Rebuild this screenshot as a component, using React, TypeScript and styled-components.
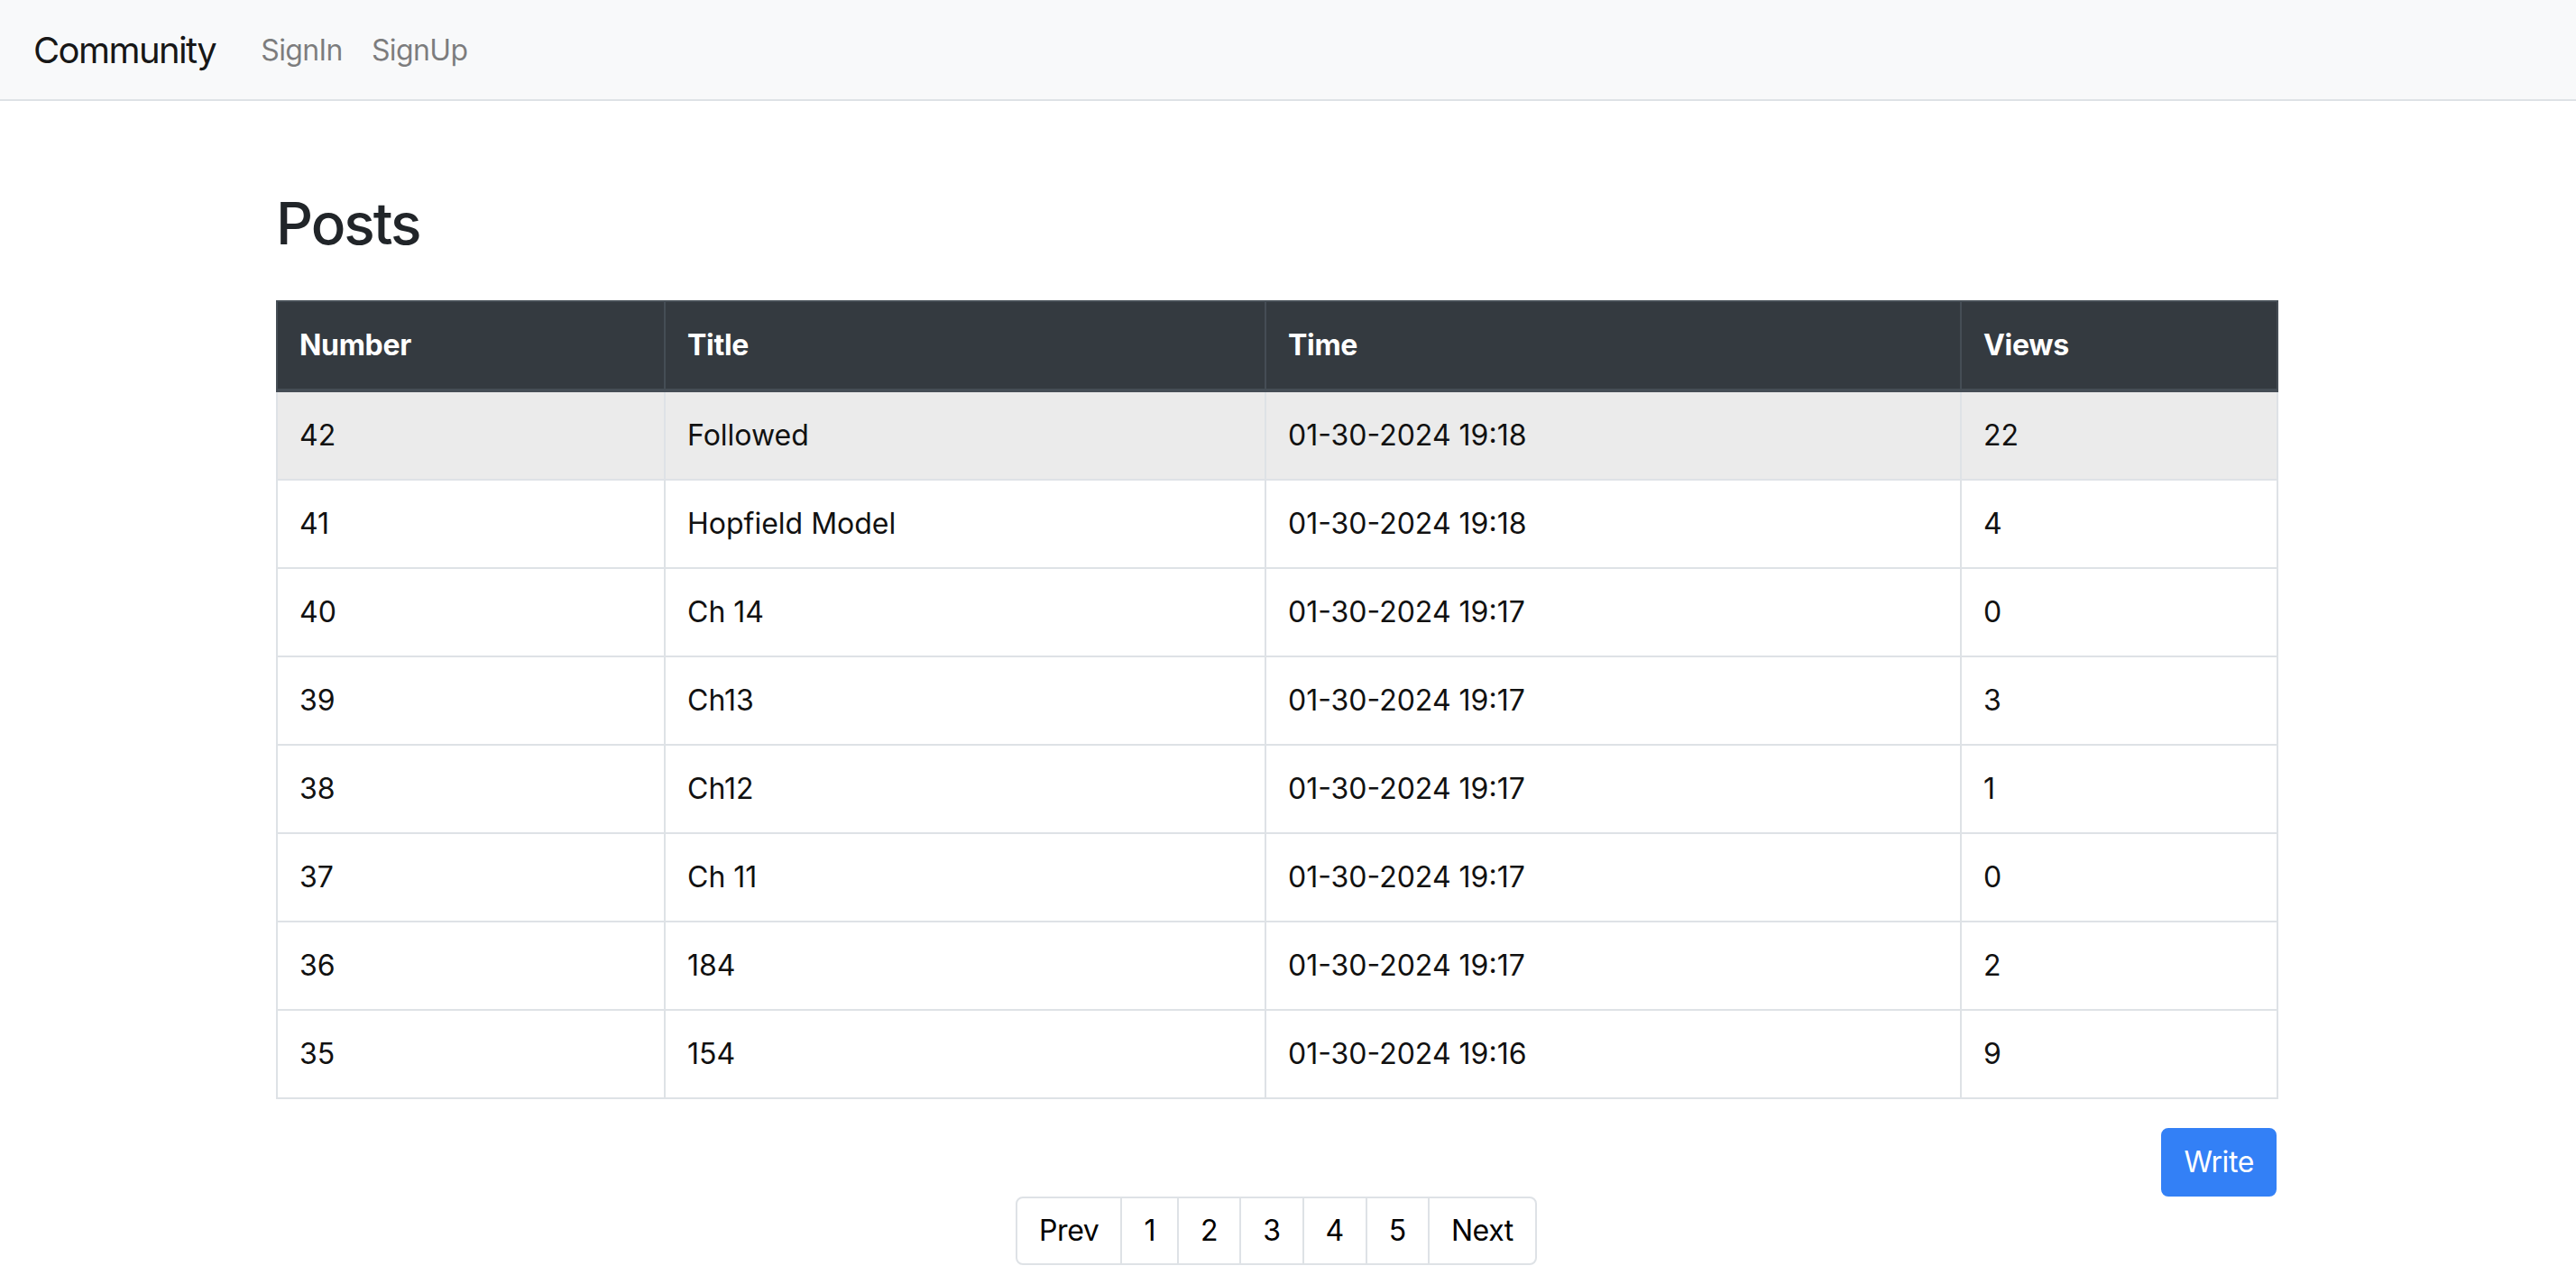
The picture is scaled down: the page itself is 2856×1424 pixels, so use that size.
import React from "react"
import styled, { createGlobalStyle } from "styled-components"

const GlobalStyle = createGlobalStyle`
  * {
    box-sizing: border-box;
  }
  body {
    margin: 0;
    background: #fff;
    color: #212529;
    font-family: Inter, "Liberation Sans", Arial, sans-serif;
  }
`

type Post = {
  id: number
  title: string
  time: string
  views: number
}

const posts: Post[] = [
  { id: 42, title: "Followed", time: "01-30-2024 19:18", views: 22 },
  { id: 41, title: "Hopfield Model", time: "01-30-2024 19:18", views: 4 },
  { id: 40, title: "Ch 14", time: "01-30-2024 19:17", views: 0 },
  { id: 39, title: "Ch13", time: "01-30-2024 19:17", views: 3 },
  { id: 38, title: "Ch12", time: "01-30-2024 19:17", views: 1 },
  { id: 37, title: "Ch 11", time: "01-30-2024 19:17", views: 0 },
  { id: 36, title: "184", time: "01-30-2024 19:17", views: 2 },
  { id: 35, title: "154", time: "01-30-2024 19:16", views: 9 },
]

const columns = [
  { label: "Number", width: 430 },
  { label: "Title", width: 666 },
  { label: "Time", width: 771 },
  { label: "Views", width: 351 },
]

const pages = ["Prev", "1", "2", "3", "4", "5", "Next"]

const Navbar = styled.nav`
  display: flex;
  align-items: center;
  height: 112px;
  padding: 2px 32px 0 37px;
  background: #f8f9fa;
  border-bottom: 2px solid #dee2e6;
`

const Brand = styled.a`
  margin-right: 34px;
  font-size: 40px;
  line-height: 60px;
  letter-spacing: -1.6px;
  color: rgba(0, 0, 0, 0.92);
  text-decoration: none;
`

const NavLinks = styled.div`
  display: flex;
`

const NavLink = styled.a`
  padding: 0 16px;
  font-size: 32px;
  line-height: 48px;
  letter-spacing: -0.6px;
  color: rgba(0, 0, 0, 0.5);
  text-decoration: none;
`

const Page = styled.main`
  padding-right: 26px;
`

const Container = styled.div`
  max-width: 2218px;
  margin: 0 auto;
`

const Heading = styled.h2`
  margin: 98px 0 46px;
  font-size: 64px;
  font-weight: 500;
  line-height: 1.2;
  letter-spacing: -2px;
  color: #212529;
`

const Table = styled.table`
  width: 100%;
  table-layout: fixed;
  border-collapse: collapse;
  margin-bottom: 32px;
  font-size: 32px;
  line-height: 48px;
`

const HeadCell = styled.th`
  padding: 24px;
  text-align: left;
  font-weight: 700;
  letter-spacing: -0.3px;
  color: #fff;
  background: #343a40;
  border: 2px solid #454d55;
  border-bottom-width: 4px;
`

const Row = styled.tr<{ $hover?: boolean }>`
  background: ${p => (p.$hover ? "#ebebeb" : "#fff")};
`

const Cell = styled.td`
  padding: 24px;
  color: #111;
  border: 2px solid #dee2e6;
`

const Actions = styled.div`
  display: flex;
  justify-content: flex-end;
`

const WriteButton = styled.button`
  padding: 12px 23px;
  font-family: inherit;
  font-size: 32px;
  line-height: 48px;
  letter-spacing: -0.4px;
  color: #fff;
  background: #3380f6;
  border: 2px solid #3380f6;
  border-radius: 8px;
`

const Pagination = styled.ul`
  display: flex;
  justify-content: center;
  margin: 0;
  padding: 0;
  list-style: none;
`

const PageItem = styled.li`
  margin-left: -2px;
  padding: 16px 24px;
  font-size: 32px;
  line-height: 40px;
  letter-spacing: -0.4px;
  color: #000;
  background: #fff;
  border: 2px solid #dee2e6;

  &:first-child {
    margin-left: 0;
    border-radius: 8px 0 0 8px;
  }
  &:last-child {
    border-radius: 0 8px 8px 0;
  }
`

const App: React.FC = () => {
  return (
    <>
      <GlobalStyle />
      <Navbar>
        <Brand href="#">Community</Brand>
        <NavLinks>
          <NavLink href="#">SignIn</NavLink>
          <NavLink href="#">SignUp</NavLink>
        </NavLinks>
      </Navbar>
      <Page>
        <Container>
          <Heading>Posts</Heading>
          <Table>
            <colgroup>
              {columns.map(col => (
                <col key={col.label} style={{ width: col.width }} />
              ))}
            </colgroup>
            <thead>
              <tr>
                {columns.map(col => (
                  <HeadCell key={col.label}>{col.label}</HeadCell>
                ))}
              </tr>
            </thead>
            <tbody>
              {posts.map((post, i) => (
                <Row key={post.id} $hover={i === 0}>
                  <Cell>{post.id}</Cell>
                  <Cell>{post.title}</Cell>
                  <Cell>{post.time}</Cell>
                  <Cell>{post.views}</Cell>
                </Row>
              ))}
            </tbody>
          </Table>
          <Actions>
            <WriteButton>Write</WriteButton>
          </Actions>
          <Pagination>
            {pages.map(p => (
              <PageItem key={p}>{p}</PageItem>
            ))}
          </Pagination>
        </Container>
      </Page>
    </>
  )
}

export default App
